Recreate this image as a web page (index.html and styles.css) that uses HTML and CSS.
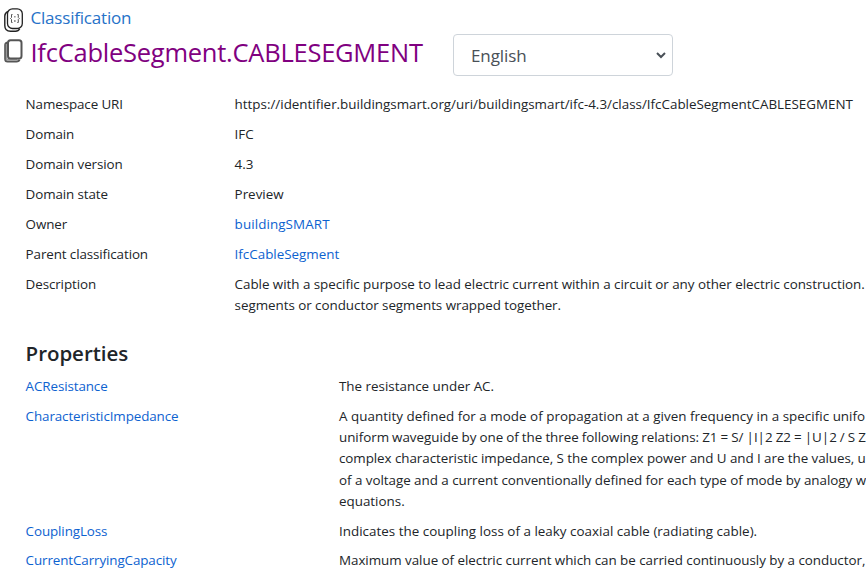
FILE: index.html
```html
<!DOCTYPE html>
<html lang="en">
<head>
<meta charset="utf-8">
<title>IfcCableSegment.CABLESEGMENT</title>
<link rel="stylesheet" href="styles.css">
</head>
<body>
<header class="head">
  <div class="crumb">
    <svg class="crumb-icon" width="20" height="25" viewBox="0 0 20 25" fill="none" stroke="#222">
      <path d="M4 3.500Q.8 5 .8 8v9.500Q.8 23.300 6.500 23.300h5q3 0 4.200-2.500" stroke-width="1.400"/>
      <rect x="3.500" y=".8" width="14.800" height="19.700" rx="5" fill="#fff" stroke-width="1.300"/>
      <path d="M8.500 6.500h-1v3l-1 1 1 1v3h1M13.300 6.500h1v3l1 1-1 1v3h-1M10.900 8v1.500M10.900 12v2" stroke="#444" stroke-width=".9"/>
    </svg>
    <a class="crumb-link">Classification</a>
  </div>
  <div class="title-row">
    <svg class="copy-icon" width="20" height="25" viewBox="0 0 20 25" fill="none" stroke="#555" stroke-width="2">
      <path d="M3.500 3.500Q1.200 4 1.200 6v14Q1.200 22.500 3.500 22.500h9q2.500 0 3-2"/>
      <path d="M2.500 5v15.500h11" stroke="#999" stroke-width="1.500"/>
      <rect x="4" y="1.200" width="13.500" height="18.200" rx="2.500" fill="#fff"/>
    </svg>
    <h1 class="title">IfcCableSegment.CABLESEGMENT</h1>
    <div class="select"><span class="select-text">English</span>
      <svg width="10" height="7" viewBox="0 0 10 7" fill="none" stroke="#495057" stroke-width="2"><path d="M1 1l4 4 4-4"/></svg>
    </div>
  </div>
</header>
<main class="main">
  <dl class="details">
    <dt>Namespace URI</dt><dd>https://identifier.buildingsmart.org/uri/buildingsmart/ifc-4.3/class/IfcCableSegmentCABLESEGMENT</dd>
    <dt>Domain</dt><dd>IFC</dd>
    <dt>Domain version</dt><dd>4.3</dd>
    <dt>Domain state</dt><dd>Preview</dd>
    <dt>Owner</dt><dd><a class="owner">buildingSMART</a></dd>
    <dt>Parent classification</dt><dd><a>IfcCableSegment</a></dd>
    <dt>Description</dt><dd class="description">Cable with a specific purpose to lead electric current within a circuit or any other electric construction.<br>segments or conductor segments wrapped together.</dd>
  </dl>
  <h2 class="subtitle">Properties</h2>
  <dl class="properties">
    <dt><a>ACResistance</a></dt><dd>The resistance under AC.</dd>
    <dt><a>CharacteristicImpedance</a></dt><dd><span class="wide">A quantity defined for a mode of propagation at a given frequency in a specific unifo</span><br><span class="formula">uniform waveguide by one of the three following relations: Z1 = S/ |I|2 Z2 = |U|2 / S Z</span><br><span class="tighter">complex characteristic impedance, S the complex power and U and I are the values, u</span><br><span class="tight">of a voltage and a current conventionally defined for each type of mode by analogy w</span><br>equations.</dd>
    <dt><a>CouplingLoss</a></dt><dd class="loose">Indicates the coupling loss of a leaky coaxial cable (radiating cable).</dd>
    <dt><a>CurrentCarryingCapacity</a></dt><dd class="tight">Maximum value of electric current which can be carried continuously by a conductor,</dd>
  </dl>
</main>
</body>
</html>
```
FILE: styles.css
```css
* { box-sizing: border-box; }
body {
  margin: 0;
  height: 573px;
  overflow: hidden;
  background: #fff;
  color: #212529;
  font: 13.4px/21.33px "Open Sans", "Noto Sans", sans-serif;
  white-space: nowrap;
}
a { color: #0d62d0; }
.head { height: 90px; padding: 6px 0 0 4px; }
.crumb { display: flex; height: 28px; }
.crumb-icon { margin-top: 2px; }
.crumb-link { margin-left: 6.500px; font-size: 17px; line-height: 24px; letter-spacing: -.2px; color: #2672c8; }
.title-row { display: flex; }
.copy-icon { margin-top: 5px; }
.title { margin: 0 0 0 6.500px; width: 422.500px; font-size: 25.5px; line-height: 36px; font-weight: 400; letter-spacing: -.25px; color: #800080; }
.select {
  display: flex; align-items: center; justify-content: space-between;
  width: 220px; height: 42px; padding: 0 6px 0 17px;
  border: 1px solid #ced4da; border-radius: 4px;
  color: #495057; font-size: 17px;
}
.select-text { padding-top: 2px; letter-spacing: -.1px; }
.main { padding-left: 25.600px; }
dl { display: grid; margin: 0; }
dt, dd { margin: 0; padding: 4.300px 0; }
dt { letter-spacing: -.1px; }
.details { grid-template-columns: 209px max-content; }
.properties { grid-template-columns: 313.400px max-content; }
.properties dt, .properties dd { padding: 4.150px 0; }
.owner { letter-spacing: .1px; }
.description, .tight { letter-spacing: -.035px; }
.wide { letter-spacing: .03px; }
.tighter { letter-spacing: -.06px; }
.formula { letter-spacing: -.03px; word-spacing: -.35px; }
.loose { letter-spacing: .02px; }
.subtitle { margin: 19.500px 0 4.700px; font-size: 20.5px; line-height: 27px; font-weight: 600; letter-spacing: -.05px; }
```
